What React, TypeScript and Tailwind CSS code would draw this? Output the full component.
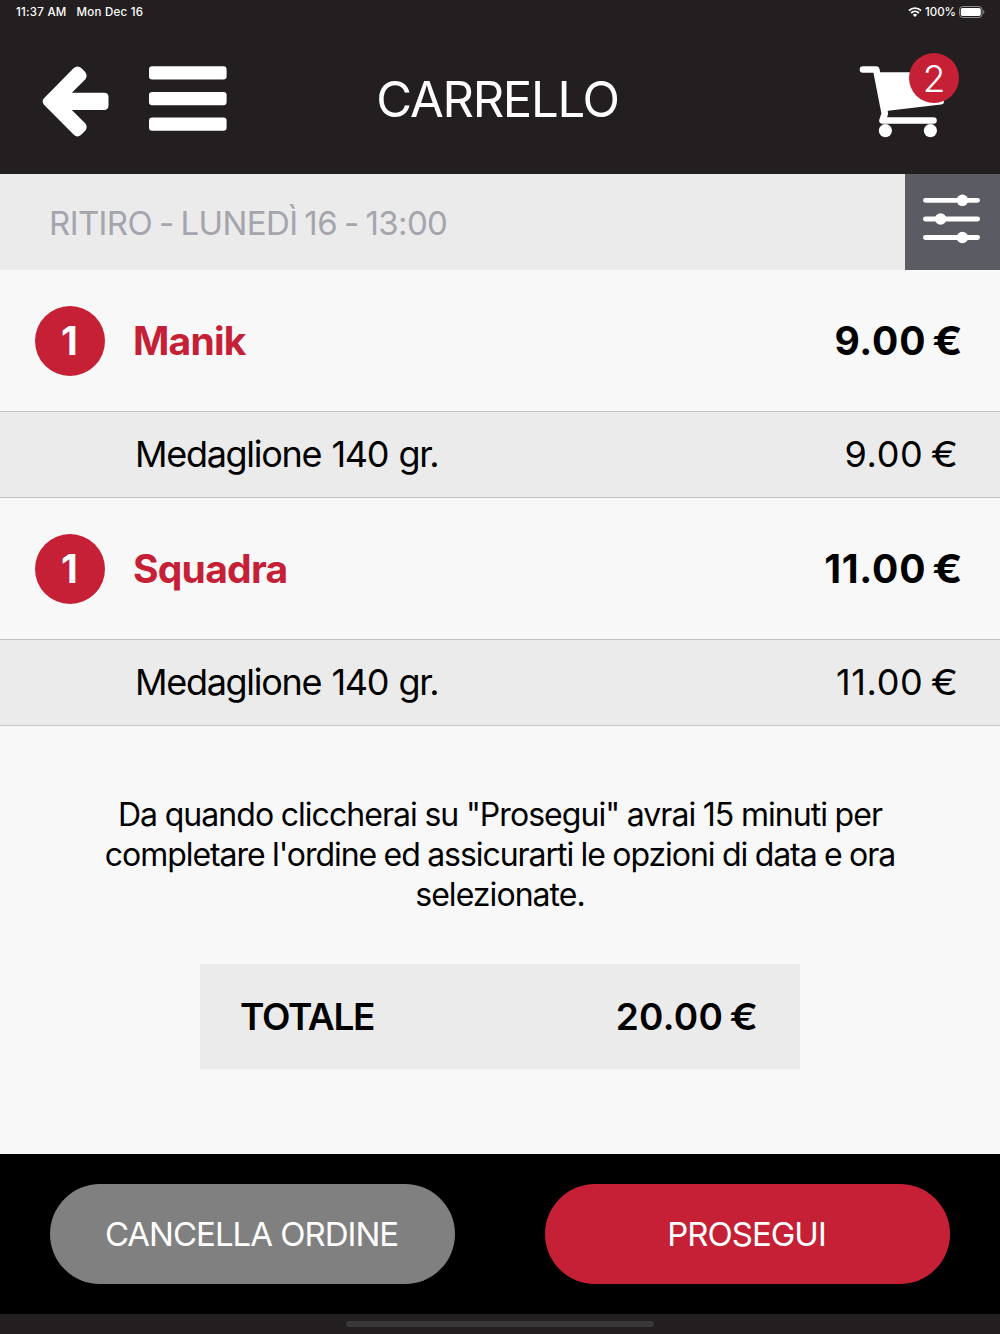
interface CartItem {
  id: number;
  quantity: number;
  name: string;
  price: string;
  extra: string;
  extraPrice: string;
}

const ITEMS: CartItem[] = [
  { id: 1, quantity: 1, name: "Manik", price: "9.00", extra: "Medaglione 140 gr.", extraPrice: "9.00" },
  { id: 2, quantity: 1, name: "Squadra", price: "11.00", extra: "Medaglione 140 gr.", extraPrice: "11.00" },
];

function BackIcon() {
  return (
    <svg width="67" height="72" viewBox="42.5 65 67 72" fill="white">
      <path d="M44.5 98.3 L74.3 68 Q78 64.8 81.7 68 L85.7 72 Q88.6 75.8 85.7 79.5 L72.3 92.7 H104.5 Q109 92.7 109 97 V105.6 Q109 110 104.5 110 H72.3 L85.7 123.3 Q88.6 127 85.7 130.8 L81.7 134.8 Q78 138 74.3 134.8 L44.5 104.7 Q41.8 101.5 44.5 98.3Z" />
    </svg>
  );
}

function MenuIcon() {
  return (
    <svg width="78" height="66" viewBox="0 0 78 66" fill="white">
      <rect x="0" y="0.2" width="77.6" height="13.2" rx="3.2" />
      <rect x="0" y="26" width="77.6" height="13.2" rx="3.2" />
      <rect x="0" y="51.4" width="77.6" height="13.4" rx="3.2" />
    </svg>
  );
}

function CartIcon() {
  return (
    <svg width="86" height="74" viewBox="19 65 86 74" fill="white" stroke="white">
      <path d="M36 72.2 H104 V101 Q104 104.2 101 104.6 L46 111 Z" stroke="none" />
      <path d="M23 69.5 H36.2 L44.8 113.5 L42.5 120.5 H93.5" fill="none" strokeWidth="6.6" strokeLinecap="round" strokeLinejoin="round" />
      <circle cx="45.4" cy="130.6" r="6.6" stroke="none" />
      <circle cx="90.4" cy="130.6" r="6.6" stroke="none" />
    </svg>
  );
}

function SlidersIcon() {
  return (
    <svg width="57" height="50" viewBox="0 0 57 50" fill="white" stroke="white">
      <path d="M2.4 6.3 H54.6 M2.4 25 H54.6 M2.4 43.5 H54.6" strokeWidth="4.8" strokeLinecap="round" />
      <circle cx="39.4" cy="6.3" r="5.8" stroke="none" />
      <circle cx="17.6" cy="25" r="5.8" stroke="none" />
      <circle cx="39.4" cy="43.5" r="5.8" stroke="none" />
    </svg>
  );
}

function WifiIcon() {
  return (
    <svg width="14" height="10" viewBox="0 0 14 10" fill="none" stroke="white" strokeWidth="1.8">
      <path d="M0.9 3.7 C4.3 0.3 9.7 0.3 13.1 3.7" />
      <path d="M3.1 6 C5.3 3.9 8.7 3.9 10.9 6" />
      <path d="M4.8 7.8 Q7 5.9 9.2 7.8 L7 10 Z" fill="white" stroke="none" />
    </svg>
  );
}

function BatteryIcon() {
  return (
    <svg width="26" height="12" viewBox="0 0 26 12" fill="white">
      <rect x="0.5" y="0.5" width="22.6" height="11" rx="3.2" fill="none" stroke="#8f8d8e" />
      <rect x="1.8" y="1.9" width="20" height="8.2" rx="1.8" />
      <path d="M24.2 4 Q25.4 4.6 25.4 6 Q25.4 7.4 24.2 8 Z" fill="#8f8d8e" />
    </svg>
  );
}

function StatusBar() {
  return (
    <div className="flex h-6 items-center justify-between pl-4 pr-[15px] text-[11.5px] font-medium">
      <div className="flex gap-[10px] pt-0.5 tracking-[0.25px]">
        <span>11:37 AM</span>
        <span>Mon Dec 16</span>
      </div>
      <div className="flex items-center">
        <WifiIcon />
        <span className="ml-[3px] mr-[3px] pt-0.5">100%</span>
        <BatteryIcon />
      </div>
    </div>
  );
}

function Price({ value }: { value: string }) {
  return (
    <span>
      {value} <span className="inline-block origin-right scale-x-[1.14] tracking-normal">€</span>
    </span>
  );
}

function CartRow({ item }: { item: CartItem }) {
  return (
    <div>
      <div className="flex h-[141px] items-center pl-[35px] pr-[37px] text-[39px] font-bold leading-none">
        <span className="flex size-[70px] items-center justify-center rounded-full bg-[#c52035] pr-px text-white">
          {item.quantity}
        </span>
        <span className="ml-7 text-[#c52035] tracking-[-0.75px]">{item.name}</span>
        <div className="ml-auto tracking-[0.8px]">
          <Price value={item.price} />
        </div>
      </div>
      <div className="flex h-[87px] items-center justify-between border-y border-[#c3c3c4] bg-[#ebebeb] pb-px pl-[135px] pr-[42px] text-[36px]">
        <span className="tracking-[-1.3px] [word-spacing:1.5px]">{item.extra}</span>
        <div className="tracking-[0.6px]">
          <Price value={item.extraPrice} />
        </div>
      </div>
    </div>
  );
}

export default function App() {
  return (
    <div className="flex h-[1334px] w-[1000px] flex-col overflow-hidden bg-[#f8f8f8] font-['Inter',sans-serif] text-black">
      {/* Header */}
      <header className="h-[174px] bg-[#231f20] text-white">
        <StatusBar />
        <div className="grid grid-cols-[1fr_auto_1fr] items-center pl-[42px] pr-[47px] pt-[37px]">
          <div className="flex items-center gap-10">
            <button className="pt-0.5"><BackIcon /></button>
            <button className="pb-0.5"><MenuIcon /></button>
          </div>
          <h1 className="text-[49px] leading-[72px] tracking-[-1.3px]">CARRELLO</h1>
          <div className="relative mr-2 mt-1 justify-self-end">
            <CartIcon />
            <span className="absolute -right-[14px] -top-[12px] flex size-[50px] items-center justify-center rounded-full bg-[#c52035] pt-0.5 text-[37px] font-light">
              2
            </span>
          </div>
        </div>
      </header>

      {/* Pickup slot */}
      <div className="flex h-24 items-center justify-between bg-[#ebebeb] pl-[49px]">
        <span className="pt-[3px] text-[33px] tracking-[-0.6px] text-[#a5a5ad] [word-spacing:-1.8px]">RITIRO - LUNEDÌ 16 - 13:00</span>
        <button className="flex h-24 w-[95px] items-center justify-center bg-[#5b5b63] pb-[6px] pr-[2px]">
          <SlidersIcon />
        </button>
      </div>

      {/* Items */}
      <main className="flex-1">
        {ITEMS.map((item) => (
          <CartRow key={item.id} item={item} />
        ))}

        <p className="pt-[69px] text-center text-[32px] leading-10 tracking-[-1.05px] [word-spacing:-0.5px]">
          <span className="tracking-[-0.95px]">Da quando cliccherai su "Prosegui" avrai 15 minuti per</span>
          <br />
          completare l'ordine ed assicurarti le opzioni di data e ora
          <br />
          <span className="tracking-[-0.95px]">selezionate.</span>
        </p>

        <div className="mx-auto mt-[49px] flex h-[105px] w-[600px] items-center justify-between bg-[#ebebeb] pl-10 pr-[42px] text-[37px] font-semibold">
          <span className="tracking-[-1.3px]">TOTALE</span>
          <div className="tracking-[0.3px]">
            <Price value="20.00" />
          </div>
        </div>
      </main>

      {/* Actions */}
      <footer>
        <div className="flex h-40 items-center justify-between bg-black px-[50px] text-[33px] tracking-[-1px] text-white">
          <button className="h-[100px] w-[405px] rounded-full bg-[#808080] pr-[2px] pt-px">CANCELLA ORDINE</button>
          <button className="h-[100px] w-[405px] rounded-full bg-[#c52035] pr-[2px] pt-px">PROSEGUI</button>
        </div>
        <div className="flex h-5 justify-center bg-[#231f20] pt-[7px]">
          <div className="h-[6px] w-[308px] rounded-full bg-[#3b3839]" />
        </div>
      </footer>
    </div>
  );
}
